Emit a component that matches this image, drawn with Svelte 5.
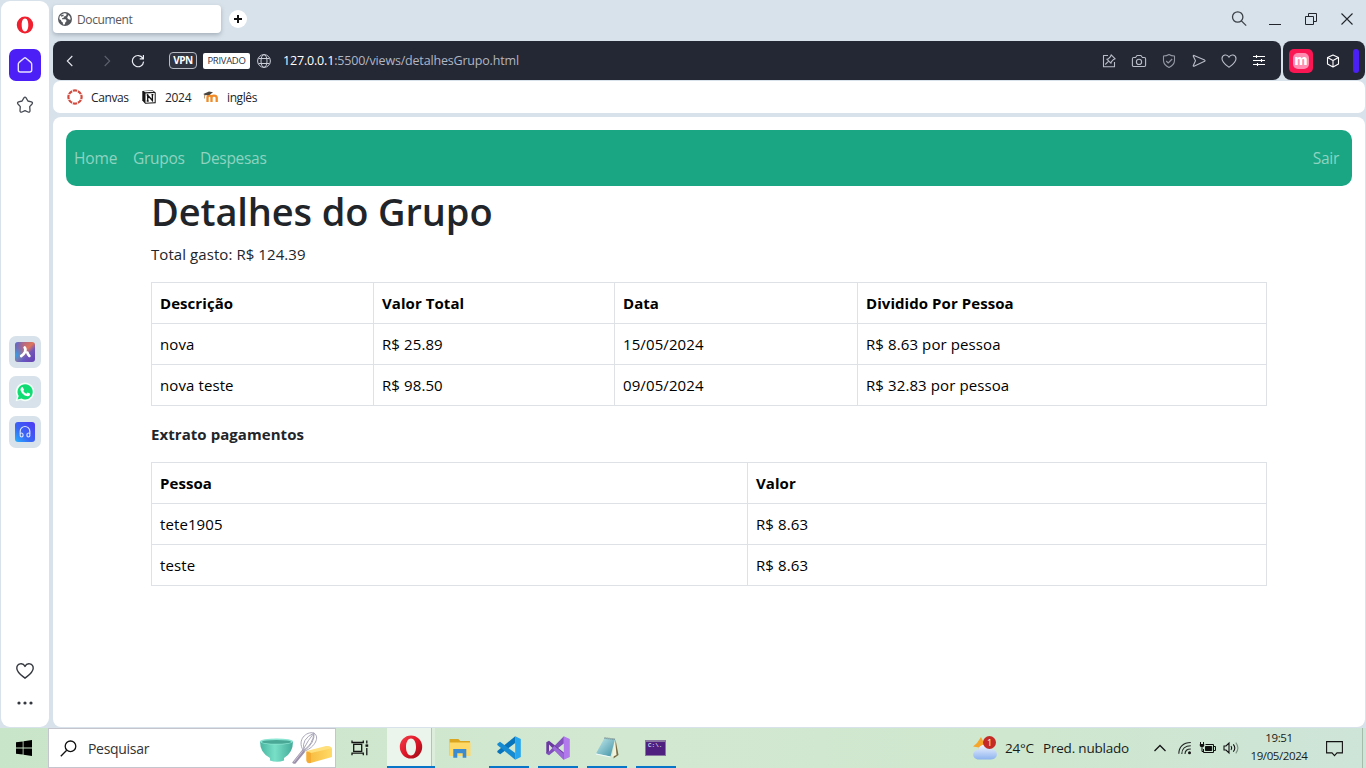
<script>
  const expenses = [
    ['nova', 'R$ 25.89', '15/05/2024', 'R$ 8.63 por pessoa'],
    ['nova teste', 'R$ 98.50', '09/05/2024', 'R$ 32.83 por pessoa']
  ];
  const payments = [
    ['tete1905', 'R$ 8.63'],
    ['teste', 'R$ 8.63']
  ];
  const ringDashes = [0, 45, 90, 135, 180, 225, 270, 315];
</script>

<div class="screen">
  <div class="browser">
    <aside class="sidebar">
      <div class="side-item opera-mini">
        <svg width="18" height="18" viewBox="0 0 18 18"><path fill="#f0202f" fill-rule="evenodd" d="M9 .6a8.2 8.4 0 1 1 0 16.8A8.2 8.4 0 1 1 9 .6zM9 2.6C6.700 2.600 5.700 5.500 5.700 9s1 6.400 3.300 6.400 3.300-2.900 3.300-6.400S11.300 2.600 9 2.600z" /></svg>
      </div>
      <div class="side-item home">
        <svg width="18" height="18" viewBox="0 0 18 18" fill="none" stroke="#e8e4ff" stroke-width="1.4" stroke-linejoin="round"><path d="M8 2.200Q9 1.400 10 2.200L14.900 6.400Q15.700 7.200 15.700 8.200V14Q15.700 16 13.700 16H4.300Q2.300 16 2.300 14V8.200Q2.300 7.200 3.100 6.400Z" /></svg>
      </div>
      <div class="side-item star">
        <svg width="18" height="18" viewBox="0 0 18 18" fill="none" stroke="#464b54" stroke-width="1.3" stroke-linejoin="round"><path d="M7.900 1.900Q9 .5 10.100 1.900L11.900 5 15.400 5.900Q17.200 6.500 16 8L13.700 10.600 14 14.500Q14 16.700 12 16L9 14.700 6 16Q4 16.700 4 14.500L4.300 10.600 2 8Q.8 6.500 2.600 5.900L6.100 5Z" /></svg>
      </div>
      <div class="side-apps">
        <div class="side-app">
          <svg width="20" height="20" viewBox="0 0 20 20">
            <defs><linearGradient id="aria" x1="0" y1="0" x2="1" y2="1"><stop offset="0" stop-color="#4f6ed6" /><stop offset=".25" stop-color="#b56a82" /><stop offset=".48" stop-color="#df7459" /><stop offset=".65" stop-color="#7456b8" /><stop offset="1" stop-color="#6040b5" /></linearGradient>
            <radialGradient id="ariaBlue" cx="0" cy=".65" r=".7"><stop offset="0" stop-color="#25a9f3" /><stop offset="1" stop-color="#5148d8" stop-opacity="0" /></radialGradient></defs>
            <rect width="20" height="20" rx="3" fill="url(#aria)" /><rect width="20" height="20" rx="3" fill="url(#ariaBlue)" />
            <path d="M9.700 5.500Q11.100 7.500 9.800 10.300 8.500 12.700 6.200 14M12.400 10.600q.5 2 2 3.300" fill="none" stroke="#fff" stroke-width="2.700" stroke-linecap="round" />
          </svg>
        </div>
        <div class="side-app">
          <svg width="20" height="20" viewBox="0 0 20 20"><path d="M.7 19.300 2 14.600A9.300 9.300 0 1 1 5.500 18Z" fill="#f4fff8" /><path d="M2.500 17.500 3.700 14A7.600 7.600 0 1 1 6.500 16.600Z" fill="#0fdc72" /><path d="M6.500 5.400q.8-.8 1.400 0l1 2q.2.500-.7 1.500 1.300 2.100 3.200 2.800l1.200-1.200 2.300 1.100q.5.300.1 1.300-1.200 1.800-3.400 1.200C8.500 13.200 5.600 10 5.500 7.400q0-1.200 1-2z" fill="#fff" /></svg>
        </div>
        <div class="side-app">
          <svg width="20" height="20" viewBox="0 0 20 20"><defs><linearGradient id="player" x1="0" y1="1" x2="1" y2="0"><stop offset="0" stop-color="#25b5ff" /><stop offset=".4" stop-color="#3867f6" /><stop offset="1" stop-color="#5038f3" /></linearGradient></defs><rect width="20" height="20" rx="3" fill="url(#player)" /><g fill="none" stroke="#d9e4ff" stroke-width="1.200"><path d="M5.200 12V9.300a4.800 4.800 0 0 1 9.600 0V12" /><ellipse cx="6.600" cy="13" rx="1.500" ry="2" /><ellipse cx="13.400" cy="13" rx="1.500" ry="2" /></g></svg>
        </div>
      </div>
      <div class="side-bottom">
        <svg width="18" height="16" viewBox="0 0 18 16" fill="none" stroke="#33373e" stroke-width="1.400" stroke-linejoin="round"><path d="M9 15.200C6 12.800.8 9.500.8 5.200.8.400 6.900-.8 9 3.400 11.100-.8 17.200.4 17.200 5.200 17.200 9.500 12 12.800 9 15.200Z" /></svg>
        <svg width="16" height="4" viewBox="0 0 16 4" fill="#33373e"><circle cx="2" cy="2" r="1.600" /><circle cx="8" cy="2" r="1.600" /><circle cx="14" cy="2" r="1.600" /></svg>
      </div>
    </aside>

    <main class="window">
      <header class="tabs">
        <div class="tab">
          <svg width="14" height="14" viewBox="0 0 14 14"><circle cx="7" cy="7" r="7" fill="#54575c" /><path d="M6.200 1.300 8.300 1.500 8.600 3 7.200 4.300 5.600 4.500 5.700 6 4 6.200 4 7.300H7.600L8.700 9 7.400 10.200 6.800 12.600 5 12.400 4.800 10.500 3.400 9.500 3 8 1.300 7.300 1.600 4.500 4 2.200z" fill="#fff" /><path d="M10.500 3 12 4.700l.7 2.600-.8.400-1.900-.8-.8-1.500z" fill="#fff" /><path d="m2.700 3.500 2.500-1 .8 1-1.600.8-.4 1z" fill="#54575c" /></svg>
          <span>Document</span>
        </div>
        <div class="new-tab"><svg width="10" height="10" viewBox="0 0 10 10" stroke="#111" stroke-width="2"><path d="M5 1v8M1 5h8" /></svg></div>
        <div class="window-controls">
          <svg width="16" height="16" viewBox="0 0 16 16" fill="none" stroke="#3c4148" stroke-width="1.300"><circle cx="6.700" cy="6" r="5.200" /><path d="m10.400 9.900 4.800 4.700" /></svg>
          <svg width="12" height="16" viewBox="0 0 12 16" stroke="#22262c"><path d="M0 13.500h12" /></svg>
          <svg width="12" height="12" viewBox="0 0 12 12" fill="none" stroke="#22262c"><path d="M3.500 3V.5h8v8H9M.5 3.500h8v8h-8z" /></svg>
          <svg width="12" height="12" viewBox="0 0 12 12" fill="none" stroke="#22262c" stroke-width="1.100"><path d="m.5.500 11 11M11.500.5l-11 11" /></svg>
        </div>
      </header>

      <div class="address-row">
        <div class="address">
          <div class="nav-icons">
            <svg width="8" height="12" viewBox="0 0 8 12" fill="none" stroke="#e6e9ee" stroke-width="1.100"><path d="M6.300 1 1.300 6l5 5" /></svg>
            <svg width="8" height="12" viewBox="0 0 8 12" fill="none" stroke="#5d616e" stroke-width="1.100"><path d="m1.700 1 5 5-5 5" /></svg>
            <svg width="14" height="14" viewBox="0 0 14 14" fill="none" stroke="#e9ecf1" stroke-width="1.200"><path d="M11.800 4.200A5.600 5.600 0 1 0 12.600 7.600M12.400 1v3.800H8.700" /></svg>
          </div>
          <span class="vpn">VPN</span>
          <span class="private">PRIVADO</span>
          <svg class="globe" width="14" height="14" viewBox="0 0 14 14" fill="none" stroke="#c9cdd6"><circle cx="7" cy="7" r="6.400" /><ellipse cx="7" cy="7" rx="3" ry="6.400" /><path d="M1.500 4.500h11M1.500 9.500h11" /></svg>
          <span class="url"><b>127.0.0.1</b>:5500/views/detalhesGrupo.html</span>
          <div class="address-icons">
            <svg viewBox="0 0 16 16"><path d="M7 2.500H2.500v11.200h11V9" /><path d="m10.200 1.800 4 4-1.600.6-2.300 2.400-.2 1.500L5.800 6.200l1.500-.3 2.300-2.400zM7.600 8.200l-3.300 3.300" /></svg>
            <svg viewBox="0 0 16 16"><path d="M2.600 4.500h2L6 2.500h4l1.400 2h2q1.200 0 1.200 1.200v6.600q0 1.200-1.200 1.200H2.600q-1.200 0-1.200-1.200V5.700q0-1.200 1.200-1.200z" /><circle cx="8" cy="8.900" r="2.600" /></svg>
            <svg viewBox="0 0 16 16" opacity=".75"><path d="M8 1.500q2.300 1.500 5.500 1.500v4.500q0 4.200-5.500 7-5.500-2.800-5.500-7V3Q5.700 3 8 1.500zM5.200 8l2 2 4-4" /></svg>
            <svg viewBox="0 0 16 16"><path d="M3 2.400 13.600 7.100q1 .6 0 1.200L3 13.200q-1 .3-.7-.7L4.500 7.800 2.300 3.200q-.3-1 .7-.8z" /></svg>
            <svg viewBox="0 0 16 16"><path d="M8 14.300C5.500 12.300 1 9.500 1 5.700 1 1.500 6.300.6 8 4.200 9.700.6 15 1.500 15 5.700 15 9.500 10.500 12.300 8 14.300Z" /></svg>
            <svg viewBox="0 0 16 16" class="bright"><path d="M2 3.500h12M2 7.500h12M2 11.500h12M5.500 2v3M10.500 6v3M6.500 10v3" /></svg>
          </div>
        </div>
        <div class="extensions">
          <div class="ext-m"><span>m</span></div>
          <svg width="14" height="14" viewBox="0 0 14 14" fill="none" stroke="#fff" stroke-width="1.100" stroke-linejoin="round"><path d="M7 1 12.500 3.600v6.500L7 13 1.500 10.100V3.600zM1.500 3.600 7 6.500l5.500-2.900M7 6.500V13" /></svg>
          <i></i>
        </div>
      </div>

      <div class="bookmarks">
        <svg width="16" height="16" viewBox="0 0 16 16">
          {#each ringDashes as angle}<path d="M5.900 1.800Q8 1 10.100 1.800" transform={`rotate(${angle} 8 8)`} fill="none" stroke="#d14a3d" stroke-width="2.200" />{/each}
        </svg>
        <span class="bm-canvas">Canvas</span>
        <svg width="14" height="14" viewBox="0 0 14 14"><path d="M.3.900 10.500.2 13.700 2.500v10.700l-10.500.6L.3 10.500z" fill="#151515" /><path d="m1.500 1.300 9-.5 1.400 1-8.500.5zM3.500 3.500l9.200-.5v9.300l-9.200.5z" fill="#fff" /><path d="M5.700 10.800V5.200l4.700 5.300V4.800M4.700 5h1.700M9.500 4.600h1.900M4.700 11h2" fill="none" stroke="#111" stroke-width="1.300" /></svg>
        <span class="bm-notion">2024</span>
        <svg width="16" height="12" viewBox="0 0 16 12"><path d="M4.500 11V6.700q0-2 2-2t2 2V11M8.500 6.700q0-2 2.500-2t2.700 2V11" fill="none" stroke="#f08b28" stroke-width="2.300" /><path d="M.3 3 6 .5l4 .7L6.400 4 2 4.200z" fill="#4a4541" /><path d="M1.500 4v3.500" stroke="#a3764c" stroke-width=".7" /></svg>
        <span class="bm-english">inglês</span>
      </div>

      <section class="page">
        <nav>
          <a href="#home" class="l-home">Home</a><a href="#grupos" class="l-groups">Grupos</a><a href="#despesas" class="l-costs">Despesas</a><a href="#sair" class="logout">Sair</a>
        </nav>
        <div class="container">
          <h1>Detalhes do Grupo</h1>
          <p>Total gasto: R$ 124.39</p>
          <table>
            <colgroup><col style="width:222px" /><col style="width:241px" /><col style="width:243px" /><col /></colgroup>
            <thead><tr><th>Descrição</th><th>Valor Total</th><th>Data</th><th>Dividido Por Pessoa</th></tr></thead>
            <tbody>{#each expenses as row}<tr>{#each row as cell}<td>{cell}</td>{/each}</tr>{/each}</tbody>
          </table>
          <p class="statement">Extrato pagamentos</p>
          <table>
            <colgroup><col style="width:596px" /><col /></colgroup>
            <thead><tr><th>Pessoa</th><th>Valor</th></tr></thead>
            <tbody>{#each payments as row}<tr>{#each row as cell}<td>{cell}</td>{/each}</tr>{/each}</tbody>
          </table>
        </div>
      </section>
    </main>
  </div>

  <footer class="taskbar">
    <div class="start"><svg width="16" height="16" viewBox="0 0 16 16"><path d="M0 2.300 6.700 1.400v6.100H0zM7.500 1.200 16 0v7.500H7.500zM0 8.400h6.700v6.200L0 13.700zM7.500 8.400H16V16l-8.500-1.200z" /></svg></div>
    <div class="search">
      <svg width="17" height="17" viewBox="0 0 17 17" fill="none" stroke="#111" stroke-width="1.300"><circle cx="10.500" cy="6.300" r="5.300" /><path d="M6.700 10.200.8 16.200" /></svg>
      <span>Pesquisar</span>
      <svg class="kitchen" width="74" height="34" viewBox="0 0 74 34">
        <defs>
          <linearGradient id="bowl"><stop offset="0" stop-color="#48b6a1" /><stop offset=".45" stop-color="#79dfc7" /><stop offset="1" stop-color="#43ac99" /></linearGradient>
          <linearGradient id="butter" x1="0" x2="1"><stop offset="0" stop-color="#f7b83c" /><stop offset="1" stop-color="#ffdb67" /></linearGradient>
        </defs>
        <path d="M1 10.500h33q0 11.500-9 16.500v2.500q-7 2.500-14 0V27Q1 22 1 10.500z" fill="url(#bowl)" /><ellipse cx="17.500" cy="10.500" rx="16.500" ry="3.100" fill="#8be5d2" /><ellipse cx="17.500" cy="10.900" rx="14.500" ry="1.900" fill="#4aa896" />
        <g fill="none" stroke="#aaa8ba" stroke-width="1"><path d="M44 19C38 9 47 0 55 2c6 4 1 14-9 18zM45 19Q42 8 55 2 54 13 45 19zM44 19Q49 9 55 2 56 12 45 20" /></g>
        <path d="m43.500 18.500 2.700 2.200-9.800 12q-2.300.6-3.200-1.200z" fill="#9b91ab" /><path d="m43.800 19.700-9 11.500" stroke="#cbc3d6" />
        <path d="M47.500 20.500 69 15.500q4 0 4 2.500v8L50.500 32.300q-3 0-3-3z" fill="url(#butter)" /><path d="M47.500 20 67 15q4-.6 6 2.200L52 22z" fill="#ffe07c" /><path d="M47.500 20.500l4.500 1.500v10q-4.500.5-4.500-3z" fill="#f5ac35" />
      </svg>
    </div>
    <div class="task-view"><svg width="18" height="16" viewBox="0 0 18 16" fill="none" stroke="#151515" stroke-width="1.300"><path d="M2.700 4.300h8v7h-8zM1 .5v2h11.300v-2M1 15.200v-2h11.300v2M15.800.5v3M15.800 8v7.200" /><path d="M14.500 5.600h2.700" stroke-width="2.400" /></svg></div>
    <div class="task opera-task">
      <svg width="24" height="24" viewBox="0 0 24 24"><defs><linearGradient id="operaRed" x1="0" y1="0" x2="1" y2="1"><stop stop-color="#f4404b" /><stop offset=".5" stop-color="#df1727" /><stop offset="1" stop-color="#980b17" /></linearGradient></defs><path fill="url(#operaRed)" fill-rule="evenodd" d="M12 .5a11.200 11.500 0 1 1 0 23 11.200 11.500 0 1 1 0-23zM12 3.500C8.600 3.500 7 7.700 7 12s1.600 8.500 5 8.500 5-4.200 5-8.500-1.600-8.500-5-8.500z" /></svg>
    </div>
    <div class="task">
      <svg width="22" height="19" viewBox="0 0 22 19"><path d="M.5 0h8.800l2 2H21v14.500H.5z" fill="#dca51f" /><path d="M.5 3.500h21V17H.5z" fill="#ffd968" /><path d="M4.300 18.800V10h13v8.800h-3.600v-4.500H8.300v4.500z" fill="#3c8bd0" /></svg>
    </div>
    <div class="task running">
      <svg width="24" height="24" viewBox="0 0 24 24"><path d="M18.200.2 23.800 3v18l-5.600 2.800z" fill="#27a5ed" /><path d="M18.200.2V7L3.200 18.300.3 16.200V15z" fill="#0874bb" /><path d="M.3 7.800 3 5.700l15.200 11.400v6.700L.3 9z" fill="#168bd2" /></svg>
    </div>
    <div class="task running">
      <svg width="24" height="24" viewBox="0 0 24 24"><path d="M17.800.2 23.800 3v18l-6 2.800z" fill="#b179eb" /><path d="M17.800.2v7.300L3 19.200l-2.700-1.500V16L3 15.500z" fill="#8150bd" /><path d="M3 4.800l14.800 11.700v7.300L3 8.500v7L.3 17V6.300z" fill="#6b3aa1" /><path d="m8.500 10 9.300 7.700v6.100L6 12z" fill="#9b68d7" /></svg>
    </div>
    <div class="task running">
      <svg width="24" height="24" viewBox="0 0 24 24"><defs><linearGradient id="note" x1="0" x2="1" y2="1"><stop stop-color="#c9edef" /><stop offset="1" stop-color="#3d91a4" /></linearGradient></defs><path d="M20.500 3.500 23.500 19l-5 3.500z" fill="#776c43" /><path d="M20 3 21.500 19l-4.500 2z" fill="#f3f2dc" /><path d="M9.500 2 20 3.200 15.500 20.500 1 17.500z" fill="url(#note)" /><path d="m1 17.500 14.500 3v1L1 18.500z" fill="#eefafa" /><path d="m9.500 2 10.500 1.200" stroke="#687d83" stroke-width="1.600" stroke-dasharray="1 1" /></svg>
    </div>
    <div class="task running"><div class="terminal"><span>C:\.</span></div></div>

    <div class="tray">
      <div class="weather">
        <svg width="26" height="26" viewBox="0 0 26 26"><defs><linearGradient id="cloud" x2="0" y2="1"><stop stop-color="#f2f5ff" /><stop offset="1" stop-color="#8cb3ef" /></linearGradient></defs><path d="m9 2 2 4 4-.5v9l-9 1 1-3-6-1L5 8z" fill="#f5a62b" /><path d="M7 24.500c-8 0-7-9.500-1-9.500 2-7.500 11-6 12-1 9-.5 9 10.500 1 10.500z" fill="url(#cloud)" /></svg>
        <span class="badge">1</span>
      </div>
      <span class="temp">24°C</span><span class="forecast">Pred. nublado</span>
      <svg class="chevron" width="12" height="8" viewBox="0 0 12 8" fill="none" stroke="#151515" stroke-width="1.300"><path d="m.5 7 5.500-5.500L11.500 7" /></svg>
      <svg class="wifi" width="14" height="14" viewBox="0 0 14 14" fill="none" stroke="#222" stroke-width="1.100"><path d="M.8 12.800C.8 6.200 5.200 1.500 12.800 1.500M3.800 13c0-5 3.500-8.200 9-8.200M7 13c0-3.300 2-5 5.800-5" /><circle cx="11.500" cy="11.700" r="1.500" fill="#111" stroke="none" /></svg>
      <svg class="battery" width="17" height="12" viewBox="0 0 17 12" fill="none" stroke="#111"><path d="M6.500 2.500h8v8h-10V7M15 4.500h1.500v4H15M1.500 0v2M4.500 0v2M3 5.500v4h1.500" /><path d="M.8 2h4.400v2L4 5.200H2L.8 4z" fill="#111" stroke="none" /><path d="M6.500 4.500h6.200v4H6.500z" fill="#111" /></svg>
      <svg class="speaker" width="17" height="14" viewBox="0 0 17 14" fill="none" stroke="#111" stroke-width="1.100"><path d="M1 5h2l3-3v10L3 9H1zM8 5q1.500 2 0 4M10.300 3.300q3 3.700 0 7.400" /><path d="M12.800 1.700q4.200 5.300 0 10.600" stroke="#7f9485" /></svg>
      <div class="clock"><span class="time">19:51</span><span class="date">19/05/2024</span></div>
      <svg class="notice" width="17" height="17" viewBox="0 0 17 17" fill="none" stroke="#111" stroke-width="1.100"><path d="M.6 1.600h15.800v11.300H11l-2.500 2.700L6 12.900H.6z" /></svg>
      <i class="desktop"></i>
    </div>
  </footer>
</div>

<style>
  :global(body) { margin: 0; overflow: hidden; }
  * { box-sizing: border-box; }
  svg { display: block; flex: none; }
  .screen { width: 1366px; height: 768px; display: flex; flex-direction: column; background: #d8e2ea; font-family: "Open Sans", "Noto Sans", sans-serif; overflow: hidden; }
  .browser { height: 728px; display: flex; gap: 4px; padding: 1px 1px 1px; }
  .sidebar { width: 48px; height: 726px; background: #fff; border-radius: 9px; display: flex; flex-direction: column; align-items: center; padding: 8px 0 22px; }
  .side-item { width: 32px; height: 32px; display: grid; place-items: center; flex: none; }
  .home { margin-top: 8px; background: #4b1ff5; border-radius: 7px; }
  .star { margin-top: 8px; }
  .side-apps { display: flex; flex-direction: column; gap: 8px; margin-top: 215px; }
  .side-app { width: 32px; height: 32px; border-radius: 7px; background: #d8e2ea; display: grid; place-items: center; }
  .side-bottom { margin-top: auto; display: flex; flex-direction: column; align-items: center; gap: 22px; }
  .window { width: 1312px; display: flex; flex-direction: column; min-width: 0; }
  .tabs { height: 40px; display: flex; padding-top: 4px; flex: none; }
  .tab { width: 168px; height: 28px; background: #fff; border-radius: 4px; box-shadow: 0 2px 4px #8b98a5aa; display: flex; align-items: center; padding-left: 5px; gap: 5px; font-size: 12px; color: #55585d; letter-spacing: -.4px; }
  .new-tab { width: 18px; height: 18px; margin: 5px 0 0 8px; background: #fff; border-radius: 50%; display: grid; place-items: center; }
  .window-controls { margin: 0 12px 0 auto; display: flex; height: 28px; align-items: center; gap: 24px; }
  .window-controls svg:first-child { margin-right: -2px; }
  .address-row { display: flex; gap: 2px; height: 39px; flex: none; }
  .address, .extensions { background: #242734; border-radius: 8px; display: flex; align-items: center; }
  .address { width: 1228px; padding: 0 14px 0 13px; }
  .nav-icons { display: flex; align-items: center; width: 79px; padding-left: 0; }
  .nav-icons svg:nth-child(2) { margin-left: 29px; }
  .nav-icons svg:nth-child(3) { margin-left: auto; }
  .vpn { width: 28px; height: 17px; margin-left: 24px; border: 1px solid #b7bbc4; border-radius: 4px; background: #303340; color: #fff; font-size: 10px; font-weight: 700; text-align: center; line-height: 15px; letter-spacing: -.4px; }
  .private { width: 47px; height: 16px; margin-left: 6px; background: #fff; border-radius: 2px; color: #30343e; font-size: 9.500px; text-align: center; line-height: 16px; letter-spacing: -.3px; }
  .globe { margin-left: 7px; }
  .url { margin-left: 12px; color: #b0b6c3; font-size: 12.500px; letter-spacing: -.18px; white-space: nowrap; }
  .url b { color: #fff; font-weight: 500; }
  .address-icons { display: flex; gap: 14px; margin-left: auto; }
  .address-icons svg { width: 16px; height: 16px; fill: none; stroke: #b9bdc8; stroke-width: 1.100; stroke-linejoin: round; }
  .address-icons .bright { stroke: #fff; }
  .extensions { width: 82px; padding-left: 6px; }
  .ext-m { width: 24px; height: 24px; background: #fa1652; border-radius: 5px; display: grid; place-items: center; }
  .ext-m span { width: 16px; height: 16px; border-radius: 5px; background: #ff8db2; color: #fff; font: 800 14px/13px Inter, sans-serif; display: flex; justify-content: center; }
  .extensions svg { margin-left: 13px; }
  .extensions i { width: 6px; height: 24px; border-radius: 3px; background: #4b20f5; margin-left: 13px; }
  .bookmarks { height: 32px; margin-top: 1px; background: #fff; border-radius: 7px; display: flex; align-items: center; padding-left: 14px; font-size: 12px; color: #22252b; flex: none; }
  .bookmarks span { margin-left: 8px; white-space: nowrap; letter-spacing: -.4px; }
  .bookmarks .bm-canvas { width: 51px; }
  .bookmarks .bm-notion { width: 38px; margin-left: 9px; letter-spacing: -.3px; }
  .page { height: 610px; margin-top: 4px; background: #fff; border-radius: 8px; padding: 13px; font-size: 15px; color: #212529; flex: none; }
  nav { height: 56px; background: #1aa683; border-radius: 10px; display: flex; align-items: center; padding: 0 13px 0 8px; }
  nav a { color: #8fd3c1; text-decoration: none; font-size: 15.500px; letter-spacing: -.3px; white-space: nowrap; }
  .l-home { width: 59px; letter-spacing: -.1px; }
  .l-groups { width: 67px; }
  .logout { margin-left: auto; }
  .container { width: 1116px; margin: 0 auto; }
  h1 { margin: 0 0 8px; height: 48px; line-height: 50px; font-size: 38px; font-weight: 600; letter-spacing: -.12px; white-space: nowrap; }
  p { margin: 0 0 16px; line-height: 24px; letter-spacing: .07px; }
  table { width: 1116px; table-layout: fixed; border-collapse: collapse; margin: 0 0 16px; color: #000; line-height: 24px; letter-spacing: .1px; }
  th, td { border: 1px solid #dee2e6; padding: 8px; text-align: left; height: 41px; white-space: nowrap; }
  th, .statement { font-weight: 700; font-size: 15px; letter-spacing: .06px; }
  .taskbar { height: 40px; display: flex; background: linear-gradient(90deg, #c9e5c9, #d3e8d1 45%, #cfe7ce 75%, #cde4d8); color: #181c18; }
  .start { width: 48px; display: grid; place-items: center; }
  .search { width: 288px; height: 40px; background: #fff; border: 1px solid #c5c5cd; display: flex; align-items: center; padding-left: 11px; font-size: 14px; letter-spacing: -.3px; color: #333; }
  .search span { margin-left: 11px; }
  .kitchen { margin: 0 2px 0 auto; }
  .task-view { width: 51px; display: grid; place-items: center; padding-right: 3px; }
  .task { width: 49px; height: 40px; display: grid; place-items: center; }
  .opera-task { width: 48px; background: linear-gradient(90deg, #ebf5eb 44px, #afc6b7 44px, #afc6b7 45px, #dceddc 45px); border-bottom: 2px solid #0875c8; }
  .running { background: linear-gradient(#0875c8, #0875c8) center bottom / 40px 2px no-repeat; }
  .terminal { width: 21px; height: 16px; background: #4f207f; border: 1px solid #8a77a1; border-top-width: 2px; color: #fff; padding-left: 2px; font: 6px/7px "Liberation Mono", monospace; }
  .terminal span { display: block; }
  .tray { margin-left: auto; display: flex; align-items: center; height: 40px; }
  .weather { position: relative; margin-right: 7px; }
  .badge { position: absolute; left: 11px; top: 1px; width: 13px; height: 13px; border-radius: 50%; background: #c42b27; color: #fff; font-size: 9px; line-height: 13px; text-align: center; }
  .temp, .forecast { font-size: 13.500px; white-space: nowrap; letter-spacing: -.2px; }
  .temp { width: 38px; }
  .forecast { width: 86px; }
  .chevron { margin-left: 25px; }
  .wifi { margin-left: 12px; }
  .battery { margin-left: 7px; }
  .speaker { margin-left: 7px; }
  .clock { width: 64px; margin-left: 7px; display: flex; flex-direction: column; align-items: center; font-size: 11.500px; line-height: 18px; letter-spacing: -.4px; white-space: nowrap; padding-bottom: 2px; }
  .notice { margin-left: 15px; }
  .desktop { width: 4px; height: 40px; margin-left: 19px; border-left: 1px solid #a6bcab; }
</style>
